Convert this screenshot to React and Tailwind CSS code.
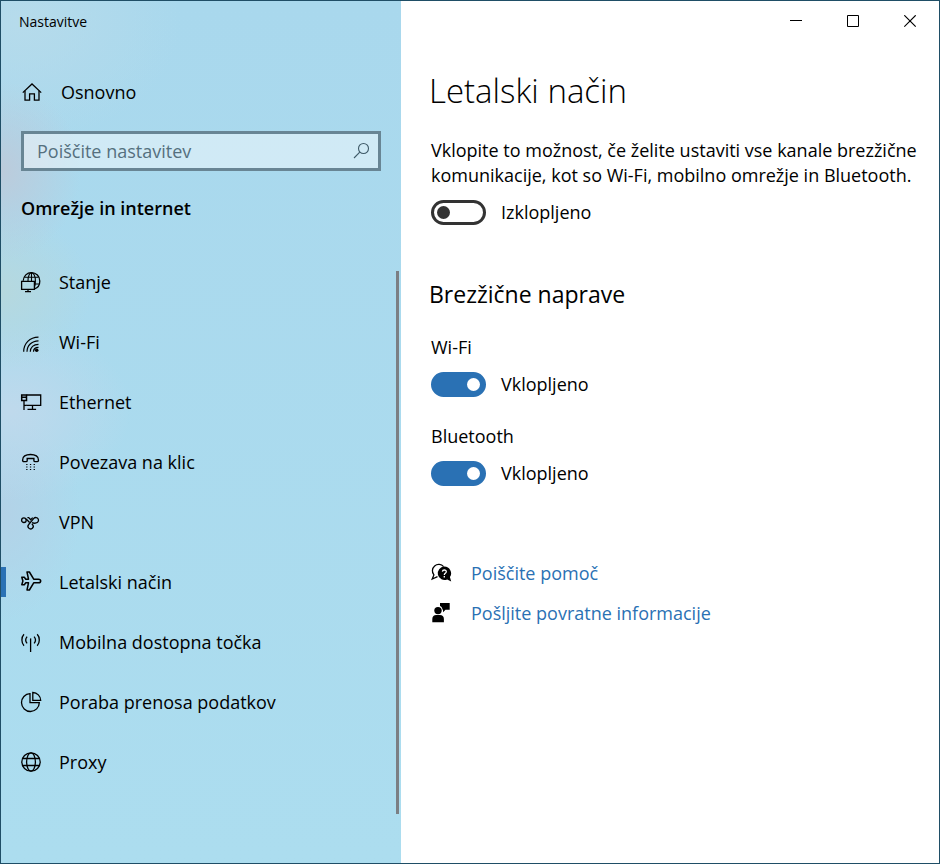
import { clsx } from "clsx"

function Icon({ children, className }) {
  return (
    <svg
      viewBox="0 0 20 20"
      className={clsx("size-5 shrink-0 overflow-visible", className)}
      fill="none"
      stroke="currentColor"
      strokeWidth="1.3"
      aria-hidden="true"
    >
      {children}
    </svg>
  )
}

const icons = {
  home: (
    <>
      <path d="M1.8 10.6 11 2l9.2 8.6" />
      <path d="M4 8.8v9.4h4.6v-6.4h4.8v6.4H18V8.8" />
    </>
  ),
  status: (
    <>
      <path d="M2.2 8.8C2.6 4 6 .6 10.4.6c4.800 0 8.400 3.700 8.400 8.300 0 4.200-2.300 7-5.300 8" />
      <path
        d="M7 9C7 4 8.600.6 10.400.6c2.300 0 4 3.800 4 8.300 0 2.600-.3 4.600-.9 6M3.400 5.200h14M13.500 12h4.500M10.500.6V9"
        strokeWidth="1.100"
      />
      <path d="M.6 9.400h12.800v8H.6zM7 17.400v2.300M4 19.600h6" />
    </>
  ),
  wifi: (
    <>
      <path
        d="M2.700 19.800C2.700 11.500 8.600 5.300 17.500 5.200M6 19.800C6 13.500 10.600 8.900 17.500 8.800M9.300 19.800c0-4.300 3.200-7.500 8.200-7.500M12.500 19.800c0-2.700 1.800-4.400 5-4.400"
        strokeWidth="1.200"
      />
      <circle cx="15.700" cy="18.300" r="1.800" fill="currentColor" stroke="none" />
    </>
  ),
  ethernet: (
    <>
      <path d="M5.500 3h14.200v10.400H5.200M11.500 13.400v4M6.500 17.400h8.600M3 9v9" />
      <path d="M3 13.400h2.500" />
      <path d="M.7 3h4.800v5.600H.7zM.7 5.300h4.800" strokeWidth="1.500" />
    </>
  ),
  dialup: (
    <>
      <path
        d="M1.600 8.300C1.300 4.300 4.800 2.500 9.500 2.500s8.300 1.800 8 5.800c0 .9-.5 1.300-1.200 1.300h-2.200c-.8 0-1.200-.5-1.200-1.200V6.500H6.200v1.900c0 .7-.4 1.200-1.200 1.200H2.800c-.7 0-1.200-.4-1.200-1.300z"
        strokeWidth="1.400"
      />
      <path
        d="M5.200 12.500h1.300m2.400 0h1.300m2.400 0h1.300M5.200 15h1.300m2.400 0h1.300m2.400 0h1.300M5.200 17.500h1.300m2.400 0h1.300m2.400 0h1.300"
        strokeWidth="1.100"
      />
    </>
  ),
  vpn: (
    <>
      <circle cx="2.900" cy="8.200" r="2.300" />
      <path d="M4.900 7l1.300 1.100 2.400 2.400" />
      <path d="M11.300 10.200c1.200 1.200 2.700 1.200 3.800.7a2.700 2.700 0 1 0-2.300-4.500L7.700 12.500a2.600 2.600 0 1 0 3.900.1l-.8-.8" />
      <path d="M6.400 5.600h1.300l2 2.100 2-2.100" />
    </>
  ),
  airplane: (
    <path
      d="M6 0h2.400l4.300 7.200h4.700c1.400 0 2.300.8 2.300 1.800s-.9 1.800-2.300 1.800h-4.700L8.400 18H6l1.500-7.200H4.800l-1.500 2H.8L1.900 9 .8 5.200h2.500l1.500 2h2.700z"
      strokeLinejoin="round"
      strokeWidth="1.500"
    />
  ),
  hotspot: (
    <>
      <path d="M3 2.300C.2 5.300.2 10.700 3 13.800M6.100 4.700c-1.700 2-1.700 4.700 0 6.700M16.200 2.300c2.800 3 2.800 8.400 0 11.500M13.100 4.700c1.700 2 1.700 4.700 0 6.700" />
      <path d="M9.600 6.400V20" />
    </>
  ),
  usage: (
    <>
      <path d="M9 1.700a8.900 8.900 0 1 0 9.300 9H9z" />
      <path d="M11.800.5a8 8 0 0 1 7.900 7.900h-7.900z" />
    </>
  ),
  proxy: (
    <>
      <circle cx="10" cy="10" r="9.200" />
      <ellipse cx="10" cy="10" rx="4.400" ry="9.200" />
      <path d="M1.600 6.500h16.800M1.600 13.500h16.800" />
    </>
  ),
}

const navItems = [
  { icon: "status", label: "Stanje" },
  { icon: "wifi", label: "Wi-Fi" },
  { icon: "ethernet", label: "Ethernet" },
  { icon: "dialup", label: "Povezava na klic" },
  { icon: "vpn", label: "VPN" },
  { icon: "airplane", label: "Letalski način", active: true },
  { icon: "hotspot", label: "Mobilna dostopna točka" },
  { icon: "usage", label: "Poraba prenosa podatkov" },
  { icon: "proxy", label: "Proxy" },
]

function Sidebar() {
  return (
    <aside className="relative w-[400px] shrink-0 bg-[radial-gradient(ellipse_80px_90px_at_0px_170px,#bccbdb,transparent),radial-gradient(ellipse_90px_80px_at_0px_290px,#b6d8de,transparent),radial-gradient(ellipse_120px_90px_at_10px_410px,#bfd9ec,transparent),radial-gradient(ellipse_80px_110px_at_0px_510px,#b3d2e7,transparent),radial-gradient(ellipse_160px_120px_at_20px_20px,#b6dbeb,transparent),linear-gradient(to_bottom,#a9d8ed,#acddef)]">
      <div className="flex h-[41px] items-center pl-[18px] text-sm">Nastavitve</div>

      <a href="#home" className="mt-5 flex h-[60px] items-center gap-5 pl-5">
        <Icon>{icons.home}</Icon>
        Osnovno
      </a>

      <div className="mx-5 mt-[9px] flex h-10 items-center border-3 border-[#688594] bg-white/45 pr-[7px] pl-[13px]">
        <input
          type="text"
          aria-label="Poiščite nastavitev"
          placeholder="Poiščite nastavitev"
          className="min-w-0 flex-1 bg-transparent outline-none placeholder:text-[#55707e]"
        />
        <Icon className="text-[#3f5a68]">
          <circle cx="12.500" cy="7.500" r="5" strokeWidth="1.100" />
          <path d="M8.800 11.200 3 17" strokeWidth="1.100" />
        </Icon>
      </div>

      <h2 className="mt-[23px] pl-5 leading-7 font-semibold">Omrežje in internet</h2>

      <nav className="mt-[30px]">
        {navItems.map((item) => (
          <a key={item.label} href="#settings" className="flex h-[60px] items-center">
            <span className={clsx("h-[30px] w-[5px]", item.active && "bg-[#2a71b4]")} />
            <Icon className="mr-[18px] ml-[15px]">{icons[item.icon]}</Icon>
            {item.label}
          </a>
        ))}
      </nav>

      {/* scrollbar thumb */}
      <div className="absolute top-[270px] right-[2px] h-[543px] w-[3px] bg-[#7b7f84]" />
    </aside>
  )
}

function WindowButtons() {
  return (
    <div className="flex h-10 justify-end">
      <button type="button" aria-label="Minimize" className="flex w-[57px] items-center justify-center">
        <svg viewBox="0 0 13 13" className="size-[13px]" stroke="currentColor" fill="none">
          <path d="M0 5.500h12" />
        </svg>
      </button>
      <button type="button" aria-label="Maximize" className="flex w-[57px] items-center justify-center">
        <svg viewBox="0 0 13 13" className="size-[13px]" stroke="currentColor" fill="none">
          <path d="M.5.5h11v11H.5z" />
        </svg>
      </button>
      <button type="button" aria-label="Close" className="flex w-[57px] items-center justify-center">
        <svg viewBox="0 0 13 13" className="size-[13px]" stroke="currentColor" fill="none">
          <path d="m.3.3 11.400 11.400m0-11.400-11.400 11.400" strokeWidth="1.200" />
        </svg>
      </button>
    </div>
  )
}

function Toggle({ label, on }) {
  return (
    <label className="mt-3 flex h-[25px] items-center gap-[15px]">
      <input
        type="checkbox"
        role="switch"
        defaultChecked={on}
        className="flex h-[25px] w-[55px] shrink-0 appearance-none items-center rounded-full border-3 border-[#333] px-[3px] before:size-[13px] before:rounded-full before:bg-[#333] checked:justify-end checked:border-[#2a71b4] checked:bg-[#2a71b4] checked:before:bg-white"
      />
      {label}
    </label>
  )
}

export default function App() {
  return (
    <div className="flex min-h-screen border border-[#1f4e66] bg-white font-['Open_Sans',sans-serif] text-[18px] leading-[25px] text-black">
      <Sidebar />

      <main className="min-w-0 flex-1">
        <WindowButtons />
        <div className="pr-5 pl-7">
          <h1 className="mt-[26px] text-[33px] leading-[48px] font-light">Letalski način</h1>
          <div className="mt-[23px] pl-0.5">
            <p>
              Vklopite to možnost, če želite ustaviti vse kanale brezžične komunikacije, kot so Wi-Fi, mobilno omrežje
              in Bluetooth.
            </p>
            <Toggle label="Izklopljeno" />
          </div>

          <h2 className="mt-[53px] text-[23px] leading-8">Brezžične naprave</h2>
          <div className="mt-[25px] pl-0.5">
            <h3>Wi-Fi</h3>
            <Toggle label="Vklopljeno" on />
            <h3 className="mt-[27px]">Bluetooth</h3>
            <Toggle label="Vklopljeno" on />
          </div>

          <div className="mt-[67px] pl-0.5 text-[#2a71b4]">
            <a href="#help" className="flex h-10 items-center gap-5">
              <Icon className="text-black">
                <path d="M6.500 13.600 1.200 16l1.700-4.100A6.300 6.300 0 1 1 12.600 3.700" />
                <path
                  d="M13.300 3.600a6.700 6.700 0 1 0 2.900 12.800l4 2-1.300-4.300a6.700 6.700 0 0 0-5.600-10.500z"
                  fill="currentColor"
                  stroke="none"
                />
                <path d="M11.400 8.600c.2-2.200 4-2.100 3.900.1-.1 1.600-2 1.500-2 3.200M13.300 13v1.500" stroke="white" />
              </Icon>
              Poiščite pomoč
            </a>
            <a href="#feedback" className="flex h-10 items-center gap-5">
              <Icon className="text-black">
                <g fill="currentColor" stroke="none">
                  <circle cx="7" cy="7.600" r="3.700" />
                  <path d="M1.300 19.300v-3.200c0-2.400 1.700-4 3.800-4H9c2.200 0 3.900 1.600 3.900 4v3.200z" />
                  <path d="M9 0h9.700v6.700h-4.200L12 9.300V6.700h-.4C11.300 4.500 10.300 3.600 9 2.900z" />
                </g>
              </Icon>
              Pošljite povratne informacije
            </a>
          </div>
        </div>
      </main>
    </div>
  )
}
